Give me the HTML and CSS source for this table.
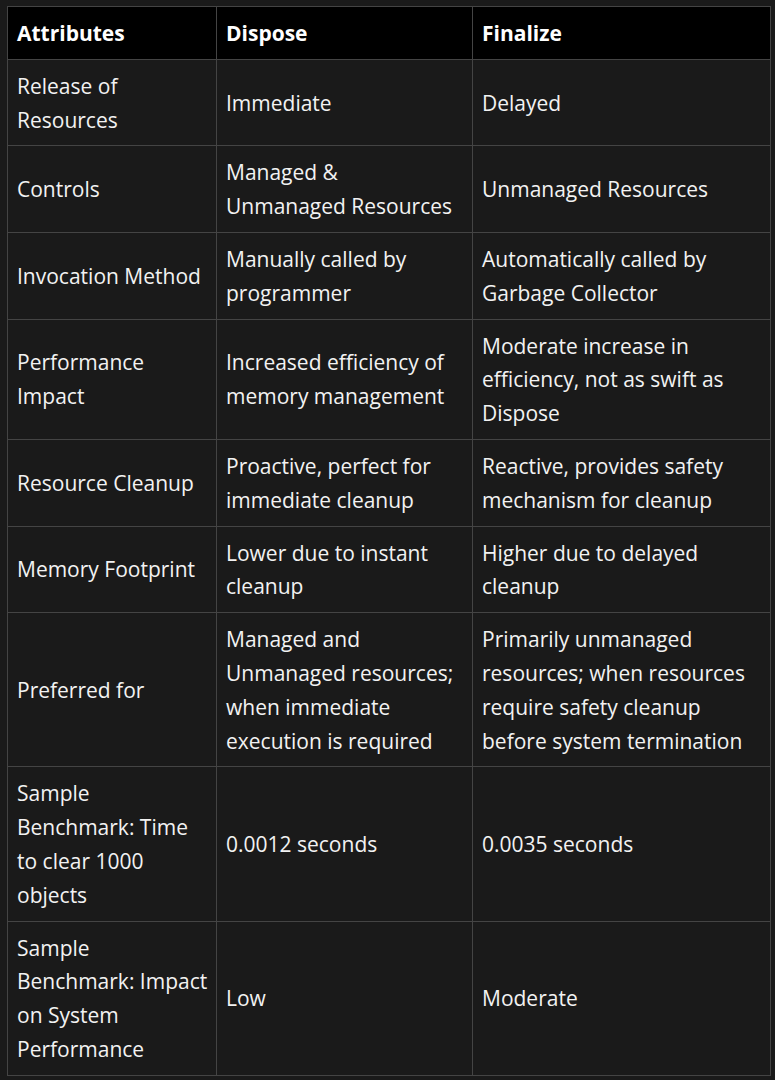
FILE: index.html
```html
<!DOCTYPE html>
<html>
<head>
<meta charset="utf-8">
<link rel="stylesheet" href="styles.css">
</head>
<body>
<table class="cmp">
  <colgroup>
    <col class="c1">
    <col class="c2">
    <col class="c3">
  </colgroup>
  <thead>
    <tr><th>Attributes</th><th>Dispose</th><th>Finalize</th></tr>
  </thead>
  <tbody>
    <tr><td>Release of<br>Resources</td><td>Immediate</td><td>Delayed</td></tr>
    <tr><td>Controls</td><td>Managed &amp;<br>Unmanaged Resources</td><td>Unmanaged Resources</td></tr>
    <tr><td>Invocation Method</td><td>Manually called by<br>programmer</td><td>Automatically called by<br>Garbage Collector</td></tr>
    <tr><td>Performance<br>Impact</td><td>Increased efficiency of<br>memory management</td><td>Moderate increase in<br>efficiency, not as swift as<br>Dispose</td></tr>
    <tr><td>Resource Cleanup</td><td>Proactive, perfect for<br>immediate cleanup</td><td>Reactive, provides safety<br>mechanism for cleanup</td></tr>
    <tr><td>Memory Footprint</td><td>Lower due to instant<br>cleanup</td><td>Higher due to delayed<br>cleanup</td></tr>
    <tr><td>Preferred for</td><td>Managed and<br>Unmanaged resources;<br>when immediate<br>execution is required</td><td>Primarily unmanaged<br>resources; when resources<br>require safety cleanup<br>before system termination</td></tr>
    <tr><td>Sample<br>Benchmark: Time<br>to clear 1000<br>objects</td><td>0.0012 seconds</td><td>0.0035 seconds</td></tr>
    <tr><td>Sample<br>Benchmark: Impact<br>on System<br>Performance</td><td>Low</td><td>Moderate</td></tr>
  </tbody>
</table>
</body>
</html>
```
FILE: styles.css
```css
html, body {
  margin: 0;
  background: #1a1a1a;
}
body {
  padding: 6px 5px 0 7px;
  font-family: "Open Sans", "Noto Sans", sans-serif;
  font-size: 21px;
  color: #f2f2f2;
}
.cmp {
  border-collapse: collapse;
  table-layout: fixed;
  width: 763px;
}
.c1 { width: 209px; }
.c2 { width: 256px; }
.c3 { width: 298px; }
.cmp th, .cmp td {
  border: 1px solid #444;
  padding: 10px 10px 8px 9px;
  line-height: 33.8px;
  white-space: nowrap;
  text-align: left;
  vertical-align: middle;
}
.cmp th {
  background: #000;
  color: #fff;
  font-weight: 700;
}
.cmp td {
  background: #1a1a1a;
}
```
